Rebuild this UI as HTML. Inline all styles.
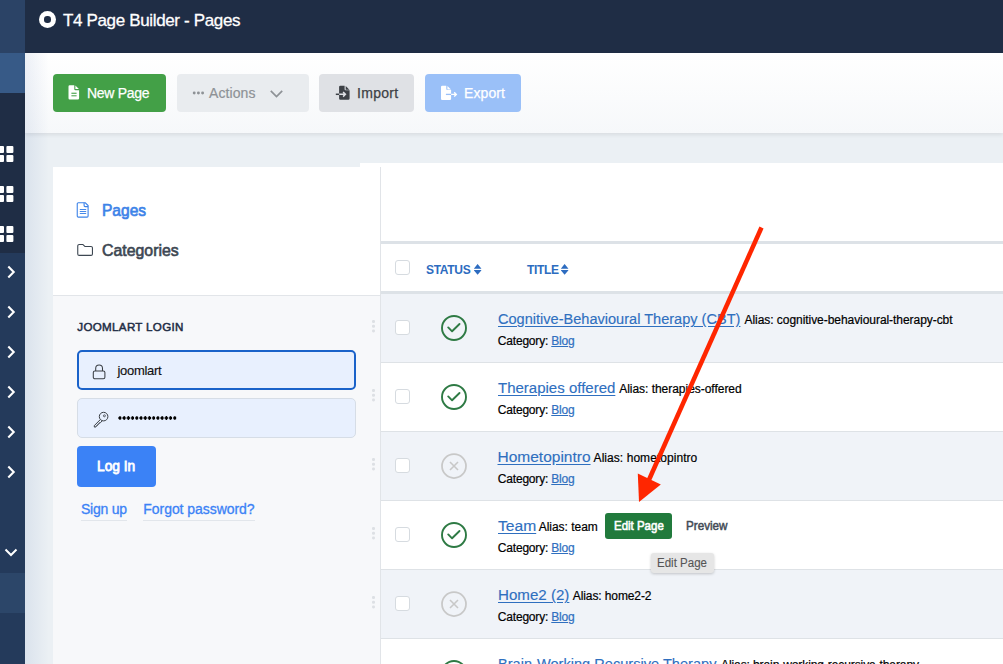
<!DOCTYPE html>
<html><head><meta charset="utf-8">
<style>
*{box-sizing:border-box;margin:0;padding:0}
html,body{width:1003px;height:664px;overflow:hidden;background:#ebf0f4;font-family:"Liberation Sans",sans-serif}
.a{position:absolute}
.t{position:absolute;white-space:nowrap;line-height:1}
</style></head><body>
<!-- sidebar -->
<div class="a" style="left:0;top:0;width:25px;height:664px;background:#243a5b"></div>
<div class="a" style="left:0;top:0;width:25px;height:53px;background:#2b4366"></div>
<div class="a" style="left:0;top:53px;width:25px;height:40px;background:#375a87"></div>
<div class="a" style="left:0;top:93px;width:25px;height:160px;background:#1f2d45"></div>
<div class="a" style="left:0;top:573px;width:25px;height:40px;background:#2c4669"></div>
<!-- header -->
<div class="a" style="left:25px;top:0;width:978px;height:53px;background:#1f2d45"></div>
<div class="a" style="left:39px;top:11px;width:17px;height:17px;border-radius:50%;background:#fff"></div>
<div class="a" style="left:44.3px;top:16.3px;width:6.4px;height:6.4px;border-radius:50%;background:#1f2d45"></div>
<div class="t" style="left:63px;top:11.5px;font-size:17px;color:#fff;letter-spacing:-0.35px;-webkit-text-stroke:0.3px #fff">T4 Page Builder - Pages</div>
<!-- toolbar -->
<div class="a" style="left:25px;top:53px;width:978px;height:80px;background:linear-gradient(#fff,#f6f8fa);box-shadow:0 2px 4px rgba(0,0,0,.08)"></div>
<div class="a" style="left:25px;top:53px;width:24px;height:611px;background:linear-gradient(to right,rgba(50,90,160,.09),rgba(50,90,160,0))"></div>


<!-- New Page -->
<div class="a" style="left:53px;top:74px;width:113px;height:38px;background:#43a047;border-radius:4px"></div>
<svg class="a" style="left:68px;top:85px" width="12" height="15" viewBox="0 0 12 15"><path d="M1.7 0.3H6.3V4.2a1 1 0 0 0 1 1H11.1V13.3a1.2 1.2 0 0 1-1.2 1.2H1.7a1.2 1.2 0 0 1-1.2-1.2V1.5a1.2 1.2 0 0 1 1.2-1.2z" fill="#fff"/><path d="M7.4 0.5L10.9 4H7.4z" fill="#fff"/><rect x="3.4" y="7.7" width="5.2" height="1.1" fill="#43a047"/><rect x="3.4" y="10.3" width="5.2" height="1" fill="#43a047"/></svg>
<div class="t" style="left:87px;top:85.5px;font-size:14px;color:#fff;letter-spacing:-0.3px;-webkit-text-stroke:0.25px #fff">New Page</div>
<!-- Actions -->
<div class="a" style="left:177px;top:74px;width:132px;height:38px;background:#e9ecef;border-radius:4px"></div>
<svg class="a" style="left:191px;top:90px" width="16" height="6" viewBox="0 0 16 6"><circle cx="3.2" cy="3" r="1.45" fill="#8e9296"/><circle cx="7.4" cy="3" r="1.45" fill="#8e9296"/><circle cx="11.6" cy="3" r="1.45" fill="#8e9296"/></svg>
<div class="t" style="left:209px;top:85.5px;font-size:14px;color:#8e9296;letter-spacing:0.1px;-webkit-text-stroke:0.2px #8e9296">Actions</div>
<svg class="a" style="left:269px;top:88.5px" width="15" height="10" viewBox="0 0 15 10"><path d="M1.8 1.8l5.7 5.7 5.7-5.7" fill="none" stroke="#8e9296" stroke-width="1.7"/></svg>
<!-- Import -->
<div class="a" style="left:319px;top:74px;width:95px;height:38px;background:#dfe1e5;border-radius:4px"></div>
<svg class="a" style="left:335px;top:85px" width="16" height="16" viewBox="0 0 16 16"><path d="M5.3 0.8H9.6V4.3a1 1 0 0 0 1 1H14.6V13.5a1.2 1.2 0 0 1-1.2 1.2H5.3a1.2 1.2 0 0 1-1.2-1.2V2a1.2 1.2 0 0 1 1.2-1.2z" fill="#3d4146"/><path d="M10.7 1L14.4 4.7H10.7z" fill="#3d4146"/><path d="M4.1 9.3H10.1M8.1 7l2.3 2.3-2.3 2.3" fill="none" stroke="#dfe1e5" stroke-width="1.5"/><path d="M0.8 9.3H4.1" stroke="#3d4146" stroke-width="1.5"/></svg>
<div class="t" style="left:357px;top:85.5px;font-size:14px;color:#3d4146;letter-spacing:0.3px;-webkit-text-stroke:0.25px #3d4146">Import</div>
<!-- Export -->
<div class="a" style="left:425px;top:74px;width:96px;height:38px;background:#9ac0f8;border-radius:4px"></div>
<svg class="a" style="left:440px;top:85px" width="18" height="16" viewBox="0 0 18 16"><path d="M2.2 0.8H6.3V4.1a1 1 0 0 0 1 1H11.1V13.7a1.2 1.2 0 0 1-1.2 1.2H2.2a1.2 1.2 0 0 1-1.2-1.2V2a1.2 1.2 0 0 1 1.2-1.2z" fill="#fff"/><path d="M7.4 1L11 4.6H7.4z" fill="#fff"/><path d="M5.9 9.4H11.1" stroke="#9ac0f8" stroke-width="1.3"/><path d="M11.1 9.4H16.1M14.2 7.3l2.1 2.1-2.1 2.1" fill="none" stroke="#fff" stroke-width="1.4"/></svg>
<div class="t" style="left:464px;top:85.5px;font-size:14px;color:#fff;letter-spacing:0.1px;-webkit-text-stroke:0.25px #fff">Export</div>

<!-- right content area -->
<div class="a" style="left:360px;top:163px;width:643px;height:501px;background:#fff"></div>
<div class="a" style="left:380px;top:241px;width:623px;height:3px;background:#dde2e7"></div>
<div class="a" style="left:380px;top:291px;width:623px;height:3px;background:#dde2e7"></div>
<!-- rows -->
<div class="a" style="left:381px;top:294px;width:622px;height:69px;background:#f0f3f8;border-bottom:1px solid #dee2e6"></div>
<div class="a" style="left:381px;top:363px;width:622px;height:69px;background:#fff;border-bottom:1px solid #dee2e6"></div>
<div class="a" style="left:381px;top:432px;width:622px;height:69px;background:#f0f3f8;border-bottom:1px solid #dee2e6"></div>
<div class="a" style="left:381px;top:501px;width:622px;height:69px;background:#fff;border-bottom:1px solid #dee2e6"></div>
<div class="a" style="left:381px;top:570px;width:622px;height:69px;background:#f0f3f8;border-bottom:1px solid #dee2e6"></div>
<div class="a" style="left:381px;top:639px;width:622px;height:69px;background:#fff"></div>
<!-- left panel -->
<div class="a" style="left:53px;top:167px;width:327px;height:497px;background:#f7f8fa"></div>
<div class="a" style="left:53px;top:167px;width:327px;height:129px;background:#fff;border-bottom:1px solid #e2e5e9"></div>
<div class="a" style="left:380px;top:167px;width:1px;height:497px;background:#e1e4e8"></div>

<!-- left panel content -->
<svg class="a" style="left:76px;top:202px" width="14" height="17" viewBox="0 0 14 17"><path d="M2.3 0.75H9.3L12.1 3.55V14.1a1.05 1.05 0 0 1-1.05 1.05H2.3a1.05 1.05 0 0 1-1.05-1.05V1.8a1.05 1.05 0 0 1 1.05-1.05z" fill="none" stroke="#3d83e8" stroke-width="1.1"/><path d="M8.1 0.75V3.6a1 1 0 0 0 1 1H12.1" fill="none" stroke="#3d83e8" stroke-width="1.1"/><path d="M4.2 7.5h5.6M4.2 9.5h5.6M4.2 11.5h5.6" stroke="#3d83e8" stroke-width="0.95" stroke-linecap="round"/></svg>
<div class="t" style="left:101.7px;top:202px;font-size:16.5px;color:#3d83e8;-webkit-text-stroke:0.7px #3d83e8;transform-origin:0 0;transform:scaleX(0.941)">Pages</div>
<svg class="a" style="left:76px;top:243px" width="18" height="14" viewBox="0 0 18 14"><path d="M1.75 3a1.45 1.45 0 0 1 1.45-1.45H7L9.1 3.55H15a1.45 1.45 0 0 1 1.45 1.45V10.9a1.45 1.45 0 0 1-1.45 1.45H3.2a1.45 1.45 0 0 1-1.45-1.45z" fill="none" stroke="#3d4752" stroke-width="1.1" stroke-linejoin="round"/></svg>
<div class="t" style="left:101.5px;top:242px;font-size:16.5px;color:#3d4752;-webkit-text-stroke:0.65px #3d4752;transform-origin:0 0;transform:scaleX(0.961)">Categories</div>

<div class="t" style="left:77.3px;top:321px;font-size:11.6px;color:#1f2d45;letter-spacing:0.32px;-webkit-text-stroke:0.5px #1f2d45">JOOMLART LOGIN</div>
<!-- username -->
<div class="a" style="left:77px;top:350px;width:279px;height:40px;background:#e8f0fe;border:2px solid #1a62c9;border-radius:5px"></div>
<svg class="a" style="left:92px;top:364px" width="14" height="16" viewBox="0 0 14 16"><rect x="1.3" y="7" width="11.6" height="7.8" rx="1.6" fill="none" stroke="#3a3f45" stroke-width="1.05"/><path d="M3.7 7v-2.6a3.4 3.4 0 0 1 6.8 0v2.6" fill="none" stroke="#3a3f45" stroke-width="1.05"/></svg>
<div class="t" style="left:117.5px;top:363.5px;font-size:13px;color:#111;letter-spacing:-0.3px;-webkit-text-stroke:0.15px #111">joomlart</div>
<!-- password -->
<div class="a" style="left:77px;top:398px;width:279px;height:40px;background:#e8f0fe;border:1px solid #d6dde6;border-radius:5px"></div>
<svg class="a" style="left:92px;top:411px" width="17" height="17" viewBox="0 0 17 17"><path d="M8.6 8.3L2.2 14.7l.2 1.4 1.5-.1.4-1.2 1.2-.3.3-1.2 1.2-.3.3-1.2 1.3-.2 1.7-1.9" fill="none" stroke="#3a3f45" stroke-width="1" stroke-linejoin="round"/><circle cx="11.6" cy="5.6" r="4.3" fill="#e8f0fe" stroke="#3a3f45" stroke-width="1"/><circle cx="12.4" cy="4.8" r="1" fill="none" stroke="#3a3f45" stroke-width="0.8"/></svg>
<div class="a" style="left:117.6px;top:415.8px;width:59.1px;height:4px;background-image:radial-gradient(circle at 2px 2px,#000 1.5px,transparent 1.85px);background-size:4.22px 4px"></div>
<!-- login button -->
<div class="a" style="left:77px;top:446px;width:79px;height:41px;background:#3b82f6;border-radius:4px"></div>
<div class="t" style="left:97px;top:458.9px;font-size:14.5px;color:#fff;-webkit-text-stroke:0.8px #fff;transform-origin:0 0;transform:scaleX(0.947)">Log In</div>
<div class="t" style="left:81px;top:502px;font-size:14px;color:#3b82f6;letter-spacing:-0.25px;padding-bottom:4px;-webkit-text-stroke:0.3px #3b82f6;border-bottom:1px solid #e2e6eb">Sign up</div>
<div class="t" style="left:143.3px;top:502px;font-size:14px;color:#3b82f6;letter-spacing:-0.05px;padding-bottom:4px;-webkit-text-stroke:0.3px #3b82f6;border-bottom:1px solid #e2e6eb">Forgot password?</div>
<!-- table header -->
<div class="a" style="left:395px;top:260px;width:15px;height:15px;background:#fff;border:1px solid #d6dbe0;border-radius:3px"></div>
<div class="t" style="left:426px;top:264px;font-size:12px;font-weight:bold;color:#2d6cc0;letter-spacing:-0.3px">STATUS</div>
<svg class="a" style="left:474px;top:263px" width="8" height="13" viewBox="0 0 8 13"><path d="M3.6 1L7.3 5.4V5.8H0V5.4z M3.6 11.8L7.3 7.5V7.1H0V7.5z" fill="#2d6cc0"/></svg>
<div class="t" style="left:527px;top:264px;font-size:12px;font-weight:bold;color:#2d6cc0;letter-spacing:-0.35px">TITLE</div>
<svg class="a" style="left:561px;top:263px" width="8" height="13" viewBox="0 0 8 13"><path d="M3.6 1L7.3 5.4V5.8H0V5.4z M3.6 11.8L7.3 7.5V7.1H0V7.5z" fill="#2d6cc0"/></svg>
<!-- rows content -->
<div class="a" style="left:395px;top:320px;width:15px;height:15px;background:#fff;border:1px solid #d6dbe0;border-radius:3px"></div>
<svg class="a" style="left:440px;top:314px" width="28" height="28" viewBox="0 0 28 28"><circle cx="14" cy="14" r="12" fill="none" stroke="#2e7a44" stroke-width="1.9"/><path d="M8.2 13.4l3.9 3.9 7.4-7.3" fill="none" stroke="#2e7a44" stroke-width="1.9" stroke-linecap="round" stroke-linejoin="round"/></svg>
<div class="a" style="left:372.2px;top:320.3px;width:2.6px;height:2.6px;border-radius:50%;background:#dde0e4;box-shadow:0 4.7px #dde0e4,0 9.4px #dde0e4"></div>
<div class="t" style="left:497.5px;top:311.45px;font-size:15.5px;color:#2f6fbf;-webkit-text-stroke:0.15px #2f6fbf;text-decoration:underline;text-underline-offset:1.5px;transform-origin:0 0;transform:scaleX(0.939)">Cognitive-Behavioural Therapy (CBT)</div>
<div class="t" style="left:744.5px;top:314.1px;font-size:12px;color:#000;letter-spacing:-0.052px;-webkit-text-stroke:0.2px #000">Alias: cognitive-behavioural-therapy-cbt</div>
<div class="t" style="left:497.8px;top:335.1px;font-size:12px;color:#000;letter-spacing:-0.19px;-webkit-text-stroke:0.2px #000">Category: <span style="color:#2f6fbf;-webkit-text-stroke:0.2px #2f6fbf;text-decoration:underline">Blog</span></div>
<div class="a" style="left:395px;top:389px;width:15px;height:15px;background:#fff;border:1px solid #d6dbe0;border-radius:3px"></div>
<svg class="a" style="left:440px;top:383px" width="28" height="28" viewBox="0 0 28 28"><circle cx="14" cy="14" r="12" fill="none" stroke="#2e7a44" stroke-width="1.9"/><path d="M8.2 13.4l3.9 3.9 7.4-7.3" fill="none" stroke="#2e7a44" stroke-width="1.9" stroke-linecap="round" stroke-linejoin="round"/></svg>
<div class="a" style="left:372.2px;top:389.3px;width:2.6px;height:2.6px;border-radius:50%;background:#dde0e4;box-shadow:0 4.7px #dde0e4,0 9.4px #dde0e4"></div>
<div class="t" style="left:497.5px;top:380.45px;font-size:15.5px;color:#2f6fbf;-webkit-text-stroke:0.15px #2f6fbf;text-decoration:underline;text-underline-offset:1.5px;transform-origin:0 0;transform:scaleX(0.968)">Therapies offered</div>
<div class="t" style="left:619.2px;top:383.1px;font-size:12px;color:#000;letter-spacing:-0.03px;-webkit-text-stroke:0.2px #000">Alias: therapies-offered</div>
<div class="t" style="left:497.8px;top:404.1px;font-size:12px;color:#000;letter-spacing:-0.19px;-webkit-text-stroke:0.2px #000">Category: <span style="color:#2f6fbf;-webkit-text-stroke:0.2px #2f6fbf;text-decoration:underline">Blog</span></div>
<div class="a" style="left:395px;top:458px;width:15px;height:15px;background:#fff;border:1px solid #d6dbe0;border-radius:3px"></div>
<svg class="a" style="left:440px;top:452px" width="28" height="28" viewBox="0 0 28 28"><circle cx="14" cy="14" r="12" fill="none" stroke="#c8c8c8" stroke-width="1.75"/><path d="M10 10l8 8M18 10l-8 8" fill="none" stroke="#c8c8c8" stroke-width="1.6"/></svg>
<div class="a" style="left:372.2px;top:458.3px;width:2.6px;height:2.6px;border-radius:50%;background:#dde0e4;box-shadow:0 4.7px #dde0e4,0 9.4px #dde0e4"></div>
<div class="t" style="left:497.5px;top:449.45px;font-size:15.5px;color:#2f6fbf;-webkit-text-stroke:0.15px #2f6fbf;text-decoration:underline;text-underline-offset:1.5px;transform-origin:0 0;transform:scaleX(1.0)">Hometopintro</div>
<div class="t" style="left:593.6px;top:452.1px;font-size:12px;color:#000;letter-spacing:0.054px;-webkit-text-stroke:0.2px #000">Alias: hometopintro</div>
<div class="t" style="left:497.8px;top:473.1px;font-size:12px;color:#000;letter-spacing:-0.19px;-webkit-text-stroke:0.2px #000">Category: <span style="color:#2f6fbf;-webkit-text-stroke:0.2px #2f6fbf;text-decoration:underline">Blog</span></div>
<div class="a" style="left:395px;top:527px;width:15px;height:15px;background:#fff;border:1px solid #d6dbe0;border-radius:3px"></div>
<svg class="a" style="left:440px;top:521px" width="28" height="28" viewBox="0 0 28 28"><circle cx="14" cy="14" r="12" fill="none" stroke="#2e7a44" stroke-width="1.9"/><path d="M8.2 13.4l3.9 3.9 7.4-7.3" fill="none" stroke="#2e7a44" stroke-width="1.9" stroke-linecap="round" stroke-linejoin="round"/></svg>
<div class="a" style="left:372.2px;top:527.3px;width:2.6px;height:2.6px;border-radius:50%;background:#dde0e4;box-shadow:0 4.7px #dde0e4,0 9.4px #dde0e4"></div>
<div class="t" style="left:497.5px;top:518.45px;font-size:15.5px;color:#2f6fbf;-webkit-text-stroke:0.15px #2f6fbf;text-decoration:underline;text-underline-offset:1.5px;transform-origin:0 0;transform:scaleX(1.008)">Team</div>
<div class="t" style="left:538.7px;top:521.1px;font-size:12px;color:#000;letter-spacing:-0.026px;-webkit-text-stroke:0.2px #000">Alias: team</div>
<div class="t" style="left:497.8px;top:542.1px;font-size:12px;color:#000;letter-spacing:-0.19px;-webkit-text-stroke:0.2px #000">Category: <span style="color:#2f6fbf;-webkit-text-stroke:0.2px #2f6fbf;text-decoration:underline">Blog</span></div>
<div class="a" style="left:395px;top:596px;width:15px;height:15px;background:#fff;border:1px solid #d6dbe0;border-radius:3px"></div>
<svg class="a" style="left:440px;top:590px" width="28" height="28" viewBox="0 0 28 28"><circle cx="14" cy="14" r="12" fill="none" stroke="#c8c8c8" stroke-width="1.75"/><path d="M10 10l8 8M18 10l-8 8" fill="none" stroke="#c8c8c8" stroke-width="1.6"/></svg>
<div class="a" style="left:372.2px;top:596.3px;width:2.6px;height:2.6px;border-radius:50%;background:#dde0e4;box-shadow:0 4.7px #dde0e4,0 9.4px #dde0e4"></div>
<div class="t" style="left:497.5px;top:587.45px;font-size:15.5px;color:#2f6fbf;-webkit-text-stroke:0.15px #2f6fbf;text-decoration:underline;text-underline-offset:1.5px;transform-origin:0 0;transform:scaleX(0.975)">Home2 (2)</div>
<div class="t" style="left:572.8px;top:590.1px;font-size:12px;color:#000;letter-spacing:-0.104px;-webkit-text-stroke:0.2px #000">Alias: home2-2</div>
<div class="t" style="left:497.8px;top:611.1px;font-size:12px;color:#000;letter-spacing:-0.19px;-webkit-text-stroke:0.2px #000">Category: <span style="color:#2f6fbf;-webkit-text-stroke:0.2px #2f6fbf;text-decoration:underline">Blog</span></div>
<div class="a" style="left:395px;top:665px;width:15px;height:15px;background:#fff;border:1px solid #d6dbe0;border-radius:3px"></div>
<svg class="a" style="left:440px;top:659px" width="28" height="28" viewBox="0 0 28 28"><circle cx="14" cy="14" r="12" fill="none" stroke="#2e7a44" stroke-width="1.9"/><path d="M8.2 13.4l3.9 3.9 7.4-7.3" fill="none" stroke="#2e7a44" stroke-width="1.9" stroke-linecap="round" stroke-linejoin="round"/></svg>
<div class="t" style="left:497.5px;top:656.45px;font-size:15.5px;color:#2f6fbf;-webkit-text-stroke:0.15px #2f6fbf;text-decoration:underline;text-underline-offset:1.5px;transform-origin:0 0;transform:scaleX(0.9416)">Brain-Working Recursive Therapy</div>
<div class="t" style="left:721px;top:659.1px;font-size:12px;color:#000;letter-spacing:-0.092px;-webkit-text-stroke:0.2px #000">Alias: brain-working-recursive-therapy</div>
<div class="t" style="left:497.8px;top:680.1px;font-size:12px;color:#000;letter-spacing:-0.19px;-webkit-text-stroke:0.2px #000">Category: <span style="color:#2f6fbf;-webkit-text-stroke:0.2px #2f6fbf;text-decoration:underline">Blog</span></div>
<!-- edit page / preview / tooltip -->
<div class="a" style="left:605px;top:513px;width:67px;height:26px;background:#217a3c;border-radius:3px"></div>
<div class="t" style="left:614px;top:520.2px;font-size:12.5px;color:#fff;-webkit-text-stroke:0.6px #fff;transform-origin:0 0;transform:scaleX(0.918)">Edit Page</div>
<div class="t" style="left:686px;top:520.2px;font-size:12.5px;color:#434b56;-webkit-text-stroke:0.5px #434b56;transform-origin:0 0;transform:scaleX(0.933)">Preview</div>
<div class="a" style="left:651px;top:553px;width:63px;height:20px;background:#e6e6e6;border-radius:3px;box-shadow:0 1px 3px rgba(0,0,0,.2)"></div>
<div class="t" style="left:657px;top:557.2px;font-size:12px;color:#555;-webkit-text-stroke:0.1px #555;transform-origin:0 0;transform:scaleX(0.961)">Edit Page</div>
<!-- red arrow -->
<svg class="a" style="left:0;top:0" width="1003" height="664" viewBox="0 0 1003 664"><path d="M761.5 227.5L648 482" stroke="#ff2600" stroke-width="4.5"/><path d="M639 502L637.8 473.6L660.8 484.5z" fill="#ff2600"/></svg>
<!-- sidebar icons -->
<div class="a" style="left:-3.5px;top:145.9px;width:7.7px;height:7.5px;border-radius:1px;background:#fff;box-shadow:9.4px 0 #fff,0 9px #fff,9.4px 9px #fff"></div>
<div class="a" style="left:-3.5px;top:185.9px;width:7.7px;height:7.5px;border-radius:1px;background:#fff;box-shadow:9.4px 0 #fff,0 9px #fff,9.4px 9px #fff"></div>
<div class="a" style="left:-3.5px;top:225.9px;width:7.7px;height:7.5px;border-radius:1px;background:#fff;box-shadow:9.4px 0 #fff,0 9px #fff,9.4px 9px #fff"></div>
<svg class="a" style="left:5px;top:265px" width="12" height="14" viewBox="0 0 12 14"><path d="M3.3 1.6l5.4 5.4-5.4 5.4" fill="none" stroke="#fff" stroke-width="2.1"/></svg>
<svg class="a" style="left:5px;top:305px" width="12" height="14" viewBox="0 0 12 14"><path d="M3.3 1.6l5.4 5.4-5.4 5.4" fill="none" stroke="#fff" stroke-width="2.1"/></svg>
<svg class="a" style="left:5px;top:345px" width="12" height="14" viewBox="0 0 12 14"><path d="M3.3 1.6l5.4 5.4-5.4 5.4" fill="none" stroke="#fff" stroke-width="2.1"/></svg>
<svg class="a" style="left:5px;top:385px" width="12" height="14" viewBox="0 0 12 14"><path d="M3.3 1.6l5.4 5.4-5.4 5.4" fill="none" stroke="#fff" stroke-width="2.1"/></svg>
<svg class="a" style="left:5px;top:425px" width="12" height="14" viewBox="0 0 12 14"><path d="M3.3 1.6l5.4 5.4-5.4 5.4" fill="none" stroke="#fff" stroke-width="2.1"/></svg>
<svg class="a" style="left:5px;top:465px" width="12" height="14" viewBox="0 0 12 14"><path d="M3.3 1.6l5.4 5.4-5.4 5.4" fill="none" stroke="#fff" stroke-width="2.1"/></svg>
<svg class="a" style="left:4px;top:546px" width="14" height="12" viewBox="0 0 14 12"><path d="M1.5 3.5l5.5 5.5 5.5-5.5" fill="none" stroke="#fff" stroke-width="2"/></svg>
</body></html>
